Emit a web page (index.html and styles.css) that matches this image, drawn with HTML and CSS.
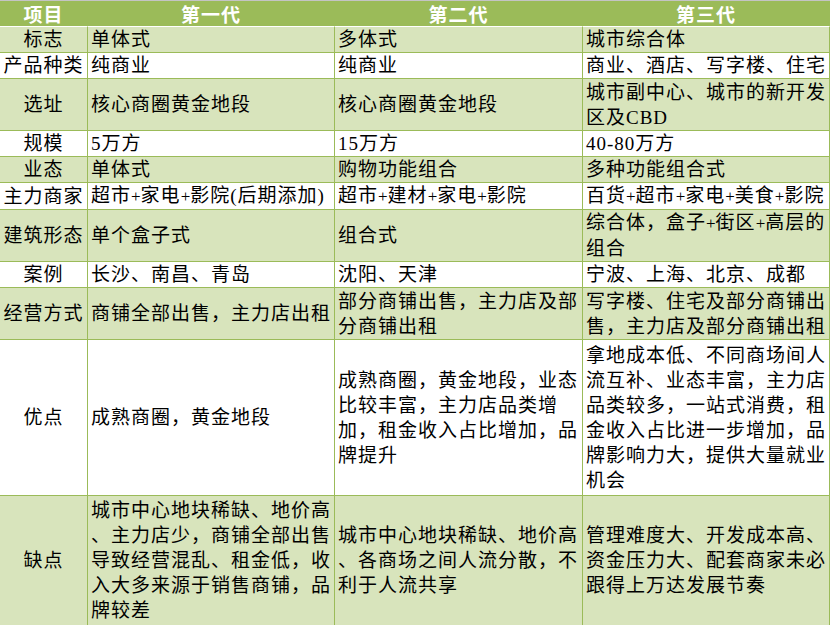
FILE: index.html
```html
<!DOCTYPE html>
<html lang="zh-CN">
<head>
<meta charset="utf-8">
<title>万达三代产品对比</title>
<link rel="stylesheet" href="styles.css">
</head>
<body>
<div class="sheet">
<table class="grid">
<colgroup><col class="c1"><col class="c2"><col class="c3"><col class="c4"></colgroup>
<thead>
<tr class="l1"><th>项目</th><th>第一代</th><th>第二代</th><th>第三代</th></tr>
</thead>
<tbody>
<tr class="l1 g"><td class="k">标志</td><td>单体式</td><td>多体式</td><td>城市综合体</td></tr>
<tr class="l1 w"><td class="k">产品种类</td><td>纯商业</td><td>纯商业</td><td>商业、酒店、写字楼、住宅</td></tr>
<tr class="l2 g"><td class="k">选址</td><td>核心商圈黄金地段</td><td>核心商圈黄金地段</td><td>城市副中心、城市的新开发<br>区及CBD</td></tr>
<tr class="l1 w"><td class="k">规模</td><td>5万方</td><td>15万方</td><td>40-80万方</td></tr>
<tr class="l1 g"><td class="k">业态</td><td>单体式</td><td>购物功能组合</td><td>多种功能组合式</td></tr>
<tr class="l1 w"><td class="k">主力商家</td><td>超市<span class="p">+</span>家电<span class="p">+</span>影院(后期添加)</td><td>超市<span class="p">+</span>建材<span class="p">+</span>家电<span class="p">+</span>影院</td><td>百货<span class="p">+</span>超市<span class="p">+</span>家电<span class="p">+</span>美食<span class="p">+</span>影院</td></tr>
<tr class="l2 g"><td class="k">建筑形态</td><td>单个盒子式</td><td>组合式</td><td>综合体，盒子<span class="p">+</span>街区<span class="p">+</span>高层的<br>组合</td></tr>
<tr class="l1 w"><td class="k">案例</td><td>长沙、南昌、青岛</td><td>沈阳、天津</td><td>宁波、上海、北京、成都</td></tr>
<tr class="l2 g"><td class="k">经营方式</td><td>商铺全部出售，主力店出租</td><td>部分商铺出售，主力店及部<br>分商铺出租</td><td>写字楼、住宅及部分商铺出<br>售，主力店及部分商铺出租</td></tr>
<tr class="l6 w"><td class="k">优点</td><td>成熟商圈，黄金地段</td><td>成熟商圈，黄金地段，业态<br>比较丰富，主力店品类增<br>加，租金收入占比增加，品<br>牌提升</td><td>拿地成本低、不同商场间人<br>流互补、业态丰富，主力店<br>品类较多，一站式消费，租<br>金收入占比进一步增加，品<br>牌影响力大，提供大量就业<br>机会</td></tr>
<tr class="l5 g"><td class="k">缺点</td><td>城市中心地块稀缺、地价高<br>、主力店少，商铺全部出售<br>导致经营混乱、租金低，收<br>入大多来源于销售商铺，品<br>牌较差</td><td>城市中心地块稀缺、地价高<br>、各商场之间人流分散，不<br>利于人流共享</td><td>管理难度大、开发成本高、<br>资金压力大、配套商家未必<br>跟得上万达发展节奏</td></tr>
</tbody>
</table>
</div>
</body>
</html>
```

FILE: styles.css
```css
html, body {
  margin: 0;
  padding: 0;
  background: #ffffff;
}

body {
  font-family: "Liberation Serif", "Noto Sans CJK SC", serif;
  color: #000000;
}

.sheet {
  width: 830px;
  border-top: 1px solid #c4c4c4;
}

.grid {
  width: 830px;
  border-collapse: separate;
  border-spacing: 0;
  table-layout: fixed;
}

.c1 { width: 88px; }
.c2 { width: 247px; }
.c3 { width: 248px; }
.c4 { width: 247px; }

.grid th,
.grid td {
  box-sizing: border-box;
  padding: 0 0 0 3px;
  border-right: 1px solid #9bbb59;
  border-bottom: 1px solid #9bbb59;
  font-size: 19px;
  letter-spacing: 1px;
  line-height: 25px;
  vertical-align: middle;
  white-space: nowrap;
  overflow: hidden;
  text-align: left;
  font-weight: normal;
}

.grid th {
  background: #9bbb59;
  color: #ffffff;
  font-family: "Noto Sans CJK SC", sans-serif;
  font-weight: bold;
  text-align: center;
  padding: 0;
  border-bottom-color: #ffffff;
}

.grid td.k {
  text-align: center;
  padding: 0;
}

.p {
  font-size: 17px;
  letter-spacing: 0;
}

.g td { background: #d8e4bc; }
.w td { background: #ffffff; }

.l1 { height: 26px; }
.l2 { height: 52px; }
.l5 { height: 130px; }
.l6 { height: 156px; }
```
